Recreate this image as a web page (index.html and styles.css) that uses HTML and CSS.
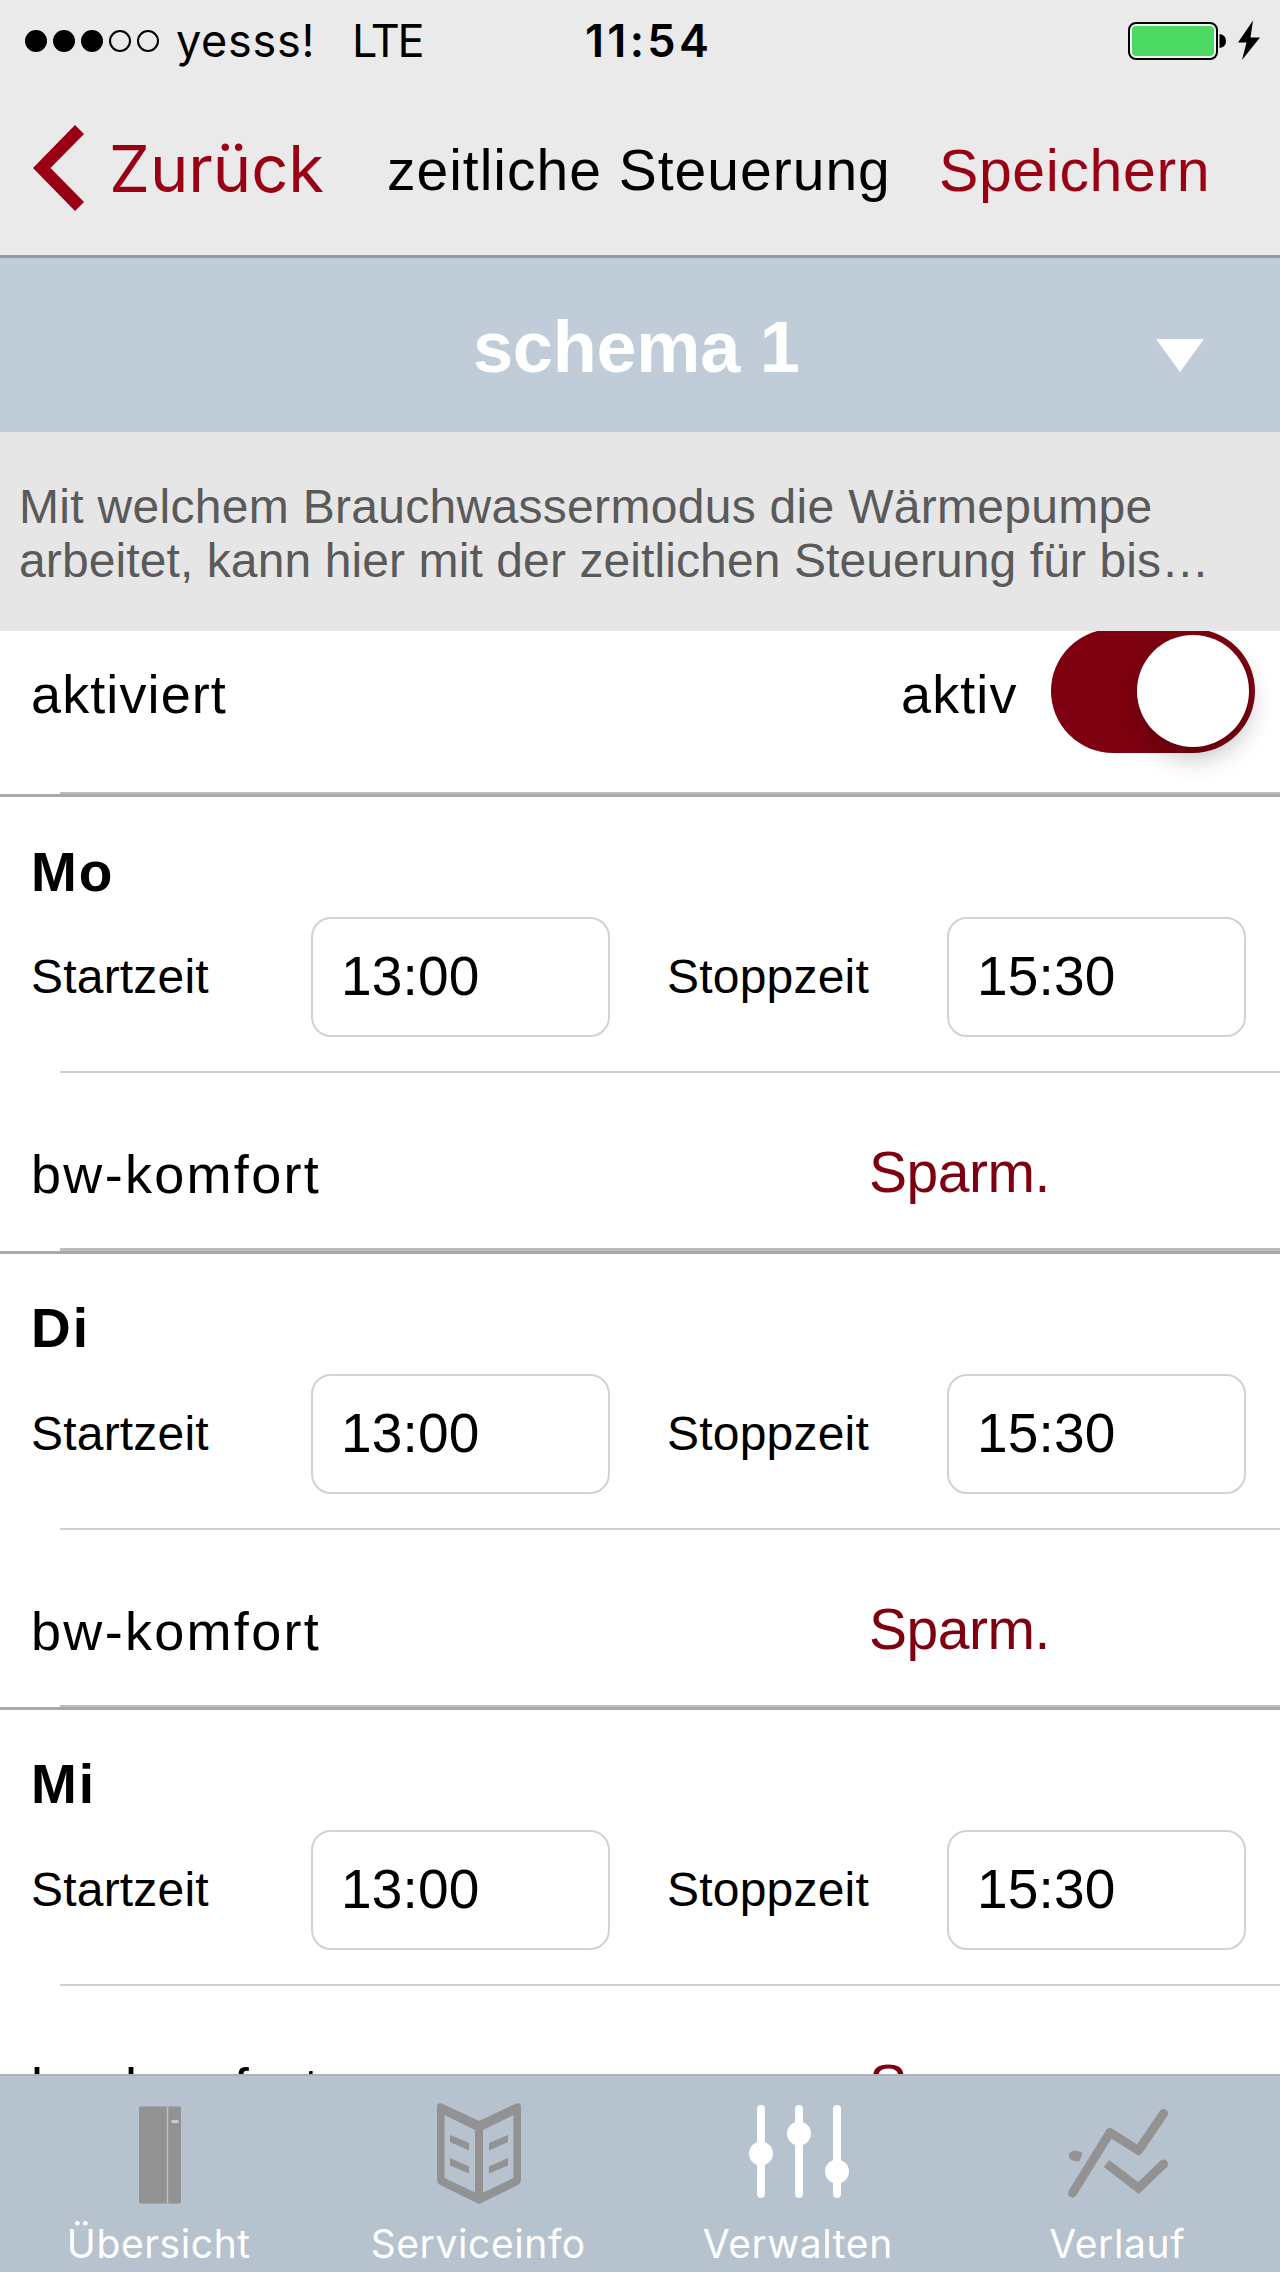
FILE: index.html
```
<!DOCTYPE html>
<html lang="de">
<head>
    <meta charset="UTF-8">
    <meta name="viewport" content="width=device-width, initial-scale=1.0">
    <title>zeitliche Steuerung</title>
    <link rel="stylesheet" href="styles.css">
</head>
<body>
    <div class="statusbar">
        <div class="signal">
            <span class="dot full"></span>
            <span class="dot full"></span>
            <span class="dot full"></span>
            <span class="dot"></span>
            <span class="dot"></span>
        </div>
        <span class="carrier">yesss!</span>
        <span class="network">LTE</span>
        <span class="clock">11:54</span>
        <svg class="battery" width="134" height="42" viewBox="0 0 134 42">
            <rect x="1" y="3" width="88" height="36" rx="7" fill="#f4f4f4" stroke="#000" stroke-width="2"/>
            <rect x="4" y="6" width="82" height="30" rx="4" fill="#4cd964"/>
            <path d="M91.500 14 Q98 15 98 21 Q98 27 91.500 28 Z"/>
            <path d="M125 0.500 L110 22.500 H118.500 L114 40 L132 17.500 H122.500 Z"/>
        </svg>
    </div>

    <header class="navbar">
        <a class="back">
            <svg width="52" height="86" viewBox="0 0 52 86">
                <path d="M0 43 L42 0 L51 9 L17.500 43 L51 77 L42 86 Z" fill="#990014"/>
            </svg>
            <span>Zurück</span>
        </a>
        <h1 class="title">zeitliche Steuerung</h1>
        <a class="save">Speichern</a>
    </header>

    <div class="schema">
        <span class="schema-name">schema 1</span>
        <span class="arrow"></span>
    </div>

    <p class="info">
        Mit welchem Brauchwassermodus die Wärmepumpe<br>
        <span class="line2">arbeitet, kann hier mit der zeitlichen Steuerung für bis…</span>
    </p>

    <main class="list">
        <div class="activate">
            <span class="label">aktiviert</span>
            <span class="state">aktiv</span>
            <span class="switch"><span class="knob"></span></span>
        </div>
        <div class="divider"></div>

        <section class="day">
            <h2>Mo</h2>
            <div class="times">
                <span>Startzeit</span>
                <div class="time">13:00</div>
                <span class="stop">Stoppzeit</span>
                <div class="time">15:30</div>
            </div>
            <div class="komfort">
                <span class="label">bw-komfort</span>
                <a class="mode">Sparm.</a>
            </div>
            <div class="divider"></div>
        </section>

        <section class="day">
            <h2>Di</h2>
            <div class="times">
                <span>Startzeit</span>
                <div class="time">13:00</div>
                <span class="stop">Stoppzeit</span>
                <div class="time">15:30</div>
            </div>
            <div class="komfort">
                <span class="label">bw-komfort</span>
                <a class="mode">Sparm.</a>
            </div>
            <div class="divider"></div>
        </section>

        <section class="day">
            <h2>Mi</h2>
            <div class="times">
                <span>Startzeit</span>
                <div class="time">13:00</div>
                <span class="stop">Stoppzeit</span>
                <div class="time">15:30</div>
            </div>
            <div class="komfort">
                <span class="label">bw-komfort</span>
                <a class="mode">Sparm.</a>
            </div>
            <div class="divider"></div>
        </section>
    </main>

    <nav class="tabbar">
        <a class="tab">
            <svg width="110" height="104" viewBox="0 0 110 104">
                <rect x="34" y="4.500" width="42" height="97" rx="1.500" fill="#929292"/>
                <path d="M62.500 5 V101" stroke="#b6c2cd" stroke-width="1.500"/>
                <ellipse cx="70" cy="19.500" rx="4" ry="1.800" fill="#c3ccd3"/>
            </svg>
            <span>Übersicht</span>
        </a>
        <a class="tab">
            <svg width="110" height="104" viewBox="0 0 110 104" fill="#929292">
                <path fill-rule="evenodd" d="M13 5 Q13 0 18 1.500 L55 19 L92 1.500 Q97 0 97 5 V78 Q97 81 94 83 L55 102 L16 83 Q13 81 13 78 Z M20.500 13 V76 L51 90.500 V28 Z M89.500 13 V76 L59 90.500 V28 Z"/>
                <path d="M26 33 L45 41 V48.500 L26 40 Z M26 56 L45 64.500 V71.500 L26 63.500 Z M84 33 L65 41 V48.500 L84 40 Z M84 56 L65 64.500 V71.500 L84 63.500 Z"/>
            </svg>
            <span>Serviceinfo</span>
        </a>
        <a class="tab">
            <svg width="110" height="104" viewBox="0 0 110 104" fill="#fff">
                <path d="M17 7 V92 M55 7 V92 M93 7 V92" stroke="#fff" stroke-width="8" stroke-linecap="round"/>
                <circle cx="17" cy="51.500" r="12"/>
                <circle cx="55" cy="31.500" r="12"/>
                <circle cx="93" cy="69.500" r="12"/>
            </svg>
            <span>Verwalten</span>
        </a>
        <a class="tab">
            <svg width="110" height="104" viewBox="0 0 110 104" fill="none" stroke="#929292" stroke-width="9">
                <path d="M9.500 91 L47 30.500 L75.500 48.500 L100.500 11.500" stroke-linecap="round" stroke-linejoin="round"/>
                <path d="M43.500 61.500 L75.500 86 L100.500 62"/>
                <circle cx="100.500" cy="62" r="4.500" fill="#929292" stroke="none"/>
                <path d="M10 49 Q14 48 19.500 51 L16.500 59 Q10 60 6.500 56 Q4 51 10 49 Z" fill="#929292" stroke="none"/>
            </svg>
            <span>Verlauf</span>
        </a>
    </nav>
</body>
</html>
```
FILE: styles.css
```
* {
    box-sizing: border-box;
}
body {
    margin: 0;
    width: 1280px;
    height: 2272px;
    overflow: hidden;
    display: flex;
    flex-direction: column;
    font-family: "Liberation Sans", Arial, sans-serif;
    color: #000;
    background-color: #fff;
    white-space: nowrap;
}
h1, h2, p {
    margin: 0;
}
.statusbar {
    flex: none;
    height: 81px;
    display: flex;
    align-items: center;
    padding-left: 25px;
    font-family: Inter, sans-serif;
    font-size: 45px;
    background-color: #eaeaea;
}
.signal {
    display: flex;
    gap: 6px;
    width: 151px;
}
.dot {
    width: 22px;
    height: 22px;
    border: 2px solid #000;
    border-radius: 50%;
}
.dot.full {
    background-color: #000;
}
.carrier {
    width: 176px;
    letter-spacing: 0.7px;
}
.network {
    width: 233px;
    letter-spacing: -2.3px;
}
.clock {
    width: 543px;
    font-weight: 600;
    letter-spacing: 3.3px;
}
.navbar {
    flex: none;
    height: 177px;
    display: grid;
    grid-template-columns: 387px 552px 1fr;
    align-items: center;
    background-color: #eaeaea;
    border-bottom: 3px solid #8d9ba5;
}
.back {
    display: flex;
    align-items: center;
    gap: 24px;
    padding-left: 33px;
    font-family: Inter, sans-serif;
    font-size: 65px;
    color: #990014;
}
.title {
    padding-top: 4px;
    font-size: 57px;
    font-weight: normal;
    letter-spacing: 1px;
}
.save {
    padding-top: 5px;
    font-size: 59px;
    letter-spacing: 0.6px;
    color: #990014;
}
.schema {
    flex: none;
    height: 174px;
    display: flex;
    align-items: center;
    padding-left: 473px;
    background-color: #c0cdd8;
    color: #fff;
}
.schema-name {
    width: 683px;
    padding-top: 3px;
    font-size: 72px;
    font-weight: bold;
    letter-spacing: -0.2px;
}
.arrow {
    margin-top: 20px;
    border-left: 24px solid transparent;
    border-right: 24px solid transparent;
    border-top: 33px solid #fff;
}
.info {
    flex: none;
    height: 199px;
    padding: 48px 0 0 19px;
    font-size: 48px;
    line-height: 54px;
    letter-spacing: 0.3px;
    color: #5a5a5a;
    background-color: #e6e6e6;
}
.line2 {
    letter-spacing: 0.1px;
}
.list {
    flex: 1;
    min-height: 0;
    overflow: hidden;
}
.activate {
    height: 161px;
    display: flex;
    align-items: flex-start;
    padding-left: 31px;
}
.label, .state {
    padding-top: 33px;
    font-size: 54px;
    line-height: 60px;
    letter-spacing: 1.1px;
}
.activate .label {
    width: 870px;
}
.state {
    width: 150px;
}
/* the top edge of the switch is scrolled under the info box */
.switch {
    width: 204px;
    height: 124px;
    margin-top: -2px;
    padding: 6px 6px 6px 86px;
    border-radius: 62px;
    background-color: #7e0010;
}
.knob {
    display: block;
    width: 112px;
    height: 112px;
    border-radius: 50%;
    background-color: #fff;
    box-shadow: 2px 12px 24px rgba(0, 0, 0, 0.22);
}
.divider {
    height: 5.3px;
    border-bottom: 3.3px solid #a9a9a9;
    background: linear-gradient(to right, #fff 60px, #bcbcbc 60px);
}
.day {
    height: 456.3px;
    padding-top: 44.5px;
}
.day h2 {
    height: 75.5px;
    padding-left: 31px;
    font-size: 55px;
    line-height: 60px;
    letter-spacing: 2px;
}
.times {
    height: 120px;
    display: grid;
    grid-template-columns: 280px 299px 57px 280px 299px;
    align-items: center;
    padding-left: 31px;
    font-size: 48px;
    letter-spacing: 0.2px;
}
.times span {
    padding-bottom: 1px;
}
.stop {
    grid-column: 4;
}
.time {
    height: 120px;
    padding-left: 28px;
    border: 2px solid #d2d2d2;
    border-radius: 20px;
    font-size: 55px;
    line-height: 114px;
}
.komfort {
    height: 177px;
    margin: 34px 0 0 60px;
    border-top: 2px solid #cfcfcf;
    display: flex;
    align-items: flex-start;
    padding-top: 38px;
}
.komfort .label {
    width: 838px;
    margin-left: -29px;
    letter-spacing: 2.3px;
}
.mode {
    padding-top: 31px;
    font-size: 57px;
    line-height: 60px;
    letter-spacing: -0.5px;
    color: #7e0010;
}
.tabbar {
    flex: none;
    height: 198px;
    display: grid;
    grid-template-columns: repeat(4, 1fr);
    padding-right: 2px;
    background-color: #b6c2cd;
    border-top: 2px solid #aab3b7;
}
.tab {
    display: flex;
    flex-direction: column;
    align-items: center;
    padding-top: 26px;
    font-family: Inter, sans-serif;
    font-size: 39px;
    line-height: 50px;
    letter-spacing: 0.6px;
    color: #fff;
}
.tab span {
    margin: 13px 2px 0 0;
}
```
